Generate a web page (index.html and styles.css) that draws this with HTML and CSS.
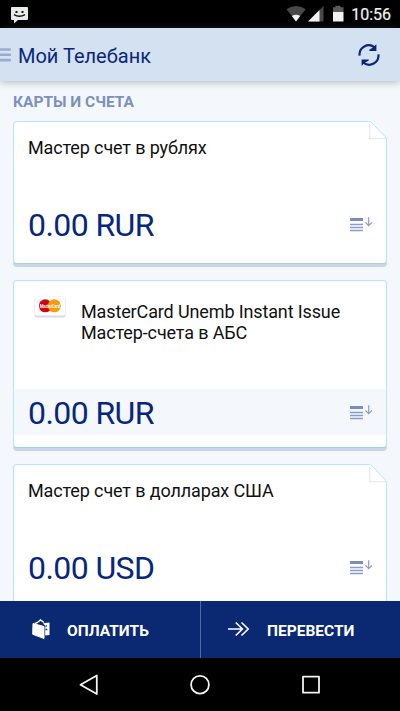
FILE: index.html
```html
<!DOCTYPE html>
<html lang="ru">
<head>
<meta charset="utf-8">
<title>Мой Телебанк</title>
<link rel="stylesheet" href="styles.css">
</head>
<body>
<svg class="defs" aria-hidden="true">
  <symbol id="details" viewBox="0 0 24 16">
    <path d="M0 1h13v3H0z" fill="#7b8dbc"/>
    <path d="M0 7.500h13M0 10.500h13M0 13.500h13" stroke="#8b9bc6" stroke-width="1.400"/>
    <path d="M18.700 .3v8.200M15.400 5.400l3.300 3.300 3.300-3.300" fill="none" stroke="#8b9bc6" stroke-width="1.200"/>
  </symbol>
  <symbol id="fold" viewBox="0 0 20 20">
    <path d="M0 0H20V20H19.500V18.500Q19.500 17.500 18.500 16.500L5 2Q3.500 .5 2 .5H0z" fill="#f4f8fc"/>
    <path d="M2.700 3V17.700H18.500" fill="none" stroke="#e8eaf3" stroke-width="1.300"/>
    <path d="M0 .5H1.500Q3.500 .5 5 2L18 15.500Q19.500 17 19.500 18.500V20" fill="none" stroke="#b2e8f8"/>
  </symbol>
</svg>
<div class="screen">
  <div class="status">
    <svg class="message" viewBox="0 0 18 17"><path d="M1 0h15q1 0 1 1v11q0 1-1 1H7l-4 3.500V13H1q-1 0-1-1V1q0-1 1-1z" fill="#e9ebe9"/><path d="M4.500 4h2v2h-2zM10.500 4h2v2h-2z" fill="#111"/><path d="M3 7.700q5.500 3.300 11 0" fill="none" stroke="#111" stroke-width="1.500"/></svg>
    <svg class="signals" viewBox="0 0 60 18">
      <path d="M.5 4.300Q10 -2.200 19.700 4.300L10 16.500z" fill="#484848"/><path d="M5.900 11Q10 8.400 14.200 11L10 16.500z" fill="#f2f2f2"/>
      <path d="M37.500 1v15.500H22z" fill="#484848"/><path d="M33.500 5v11.500H22z" fill="#f2f2f2"/>
      <path d="M49.500 .7h5v1.500h3V7H47V2.200h2.500z" fill="#5a5a5a"/><path d="M47 7h10.500v9.500H47z" fill="#f2f2f2"/>
    </svg>
    <span class="clock">10:56</span>
  </div>
  <header class="header">
    <svg class="menu" viewBox="0 0 11 14"><path d="M0 1.500h9.800M0 6.800h9.800M0 12.100h9.800" stroke="#9aabd2" stroke-width="2.600" stroke-linecap="round"/></svg>
    <h1 class="title">Мой Телебанк</h1>
    <svg class="refresh" viewBox="0 0 22 22"><path d="M1.600 11.600A9.200 9.200 0 0 1 16.500 3.400M20.400 10.400A9.200 9.200 0 0 1 5.500 18.600" fill="none" stroke="#08277c" stroke-width="2.200"/><path d="M18.400 .3V7H11.300V5.800L14.500 3.800zM3.600 21.700V15.500H10.700V16.700L7.500 18.200z" fill="#08277c"/></svg>
  </header>
  <main class="content">
    <h2 class="section">КАРТЫ И СЧЕТА</h2>
    <article class="card card-account">
      <svg class="fold"><use href="#fold"/></svg>
      <h3 class="name">Мастер счет в рублях</h3>
      <div class="balance"><span class="amount">0.00 RUR</span><svg class="details"><use href="#details"/></svg></div>
    </article>
    <article class="card card-plastic">
      <div class="product">
        <svg class="brand" viewBox="0 0 34 22"><rect x="1.500" y="1.700" width="31" height="19.800" rx="2.500" fill="#d9d9e9"/><rect x="1.800" y=".5" width="30.400" height="19" rx="2" fill="#fff" stroke="#ededf5" stroke-width=".6"/><circle cx="12.300" cy="9.800" r="6.500" fill="#cc0712"/><circle cx="21.300" cy="9.800" r="6.500" fill="#fb9b0c"/><text x="16.800" y="11.700" textLength="20" lengthAdjust="spacingAndGlyphs" text-anchor="middle">MasterCard</text></svg>
        <h3 class="name">MasterCard Unemb Instant Issue<br>Мастер-счета в АБС</h3>
      </div>
      <div class="balance"><span class="amount">0.00 RUR</span><svg class="details"><use href="#details"/></svg></div>
    </article>
    <article class="card card-account">
      <svg class="fold"><use href="#fold"/></svg>
      <h3 class="name">Мастер счет в долларах США</h3>
      <div class="balance"><span class="amount">0.00 USD</span><svg class="details"><use href="#details"/></svg></div>
    </article>
  </main>
  <div class="actions">
    <div class="action"><svg viewBox="0 0 22 20"><path d="M3 4.500L2.700 15.300 14 19.500V7.500z" fill="#fff" stroke="#fff" stroke-linejoin="round"/><path d="M5 4.500L7.500 3.500 10.500 1 14 3.500" fill="none" stroke="#fff" stroke-width="1.400"/><path d="M13 4.200L19.500 3.500V16L15.200 16.500V7z" fill="#fff"/><path d="M15.500 7h1.300M15.500 10.500h1.800" stroke="#0b2972" stroke-width="1.500"/></svg><span>ОПЛАТИТЬ</span></div>
    <div class="action"><svg viewBox="0 0 22 20"><path d="M0 10h14M7.700 3.500l6.700 6.500-6.700 6.500M13.500 3.500l6.700 6.500-6.700 6.500" fill="none" stroke="#fff" stroke-width="1.600"/></svg><span>ПЕРЕВЕСТИ</span></div>
  </div>
  <nav class="nav">
    <svg viewBox="0 0 22 22"><path d="M18.800 1.500v18.500L2.500 10.700z"/></svg>
    <svg viewBox="0 0 22 22"><circle cx="11" cy="10.700" r="8.900"/></svg>
    <svg viewBox="0 0 22 22"><rect x="3" y="2.700" width="16" height="16"/></svg>
  </nav>
</div>
</body>
</html>
```
FILE: styles.css
```css
* { box-sizing: border-box; }
body { margin: 0; font-family: Roboto, sans-serif; background: #000; }
h1, h2, h3 { margin: 0; font-weight: 400; }
svg { display: block; flex: none; }
.defs { position: absolute; width: 0; height: 0; }
.screen { display: flex; flex-direction: column; width: 400px; height: 711px; overflow: hidden; }

.status { display: flex; align-items: center; flex: none; height: 28px; padding: 0 9px 0 11px; color: #f2f2f2; }
.message { width: 18px; height: 17px; margin-top: 2px; }
.signals { width: 60px; height: 18px; margin-left: auto; margin-right: 5px; }
.clock { width: 40px; font-size: 16px; line-height: 28px; padding-top: 1px; text-align: right; white-space: nowrap; -webkit-text-stroke: .2px #f2f2f2; }

.header { position: relative; display: flex; align-items: center; flex: none; height: 53px; padding-right: 20px; background: #d4e1f1; box-shadow: 0 1px 8px rgba(70, 80, 90, .4); }
.menu { width: 11px; height: 14px; }
.title { margin-left: 7px; padding-top: 2px; font-size: 20px; line-height: 28px; color: #08277c; }
.refresh { width: 22px; height: 22px; margin-left: auto; }

.content { display: flex; flex-direction: column; flex: 1; min-height: 0; padding: 12px 13px 0; overflow: hidden; background: #f4f8fc; }
.section { flex: none; margin-bottom: 9px; font-size: 15.500px; font-weight: 700; line-height: 19px; color: #7b90bd; }
.card { position: relative; flex: none; margin-bottom: 16px; border: 1px solid #b2e8f8; border-bottom-color: #9ed4e9; border-radius: 4px; background: #fff; box-shadow: 0 3px 0 #cad5ea; }
.card-account { height: 143px; padding-top: 15px; }
.card-account .name { padding-left: 14px; }
.card-account .balance { margin-top: 44px; }
.card-plastic { height: 168px; }
.fold { position: absolute; top: -1px; right: -1px; width: 20px; height: 20px; }
.name { font-size: 18px; line-height: 21px; letter-spacing: -.13px; color: #111; }
.product { display: flex; height: 108px; padding: 15px 0 0 19px; }
.product .name { margin: 5px 0 0 14px; }
.brand { width: 34px; height: 22px; }
.brand text { font-size: 5.500px; font-weight: 700; font-style: italic; fill: #fff; }
.balance { display: flex; justify-content: space-between; align-items: center; height: 46px; padding: 0 12px 0 14px; }
.card-plastic .balance { background: #f4f8fc; }
.amount { font-size: 32px; line-height: 46px; letter-spacing: -.58px; color: #08277c; }
.card-plastic .amount { padding-top: 2px; }
.card-plastic .details { margin-top: 1px; }
.details { width: 24px; height: 16px; }

.actions { display: grid; grid-template-columns: 200px 200px; flex: none; height: 57px; background: #0b2972; }
.action { display: flex; align-items: center; padding: 2px 0 0 30px; gap: 15px; color: #fff; font-size: 15.500px; font-weight: 700; }
.action + .action { padding-left: 27px; gap: 17px; border-left: 1px solid #536a9e; }
.action svg { width: 22px; height: 20px; margin-bottom: 3px; }
.nav { display: flex; justify-content: center; align-items: center; flex: none; gap: 89px; height: 53px; background: #000; }
.nav svg { width: 22px; height: 22px; fill: none; stroke: #f2f2f2; stroke-width: 1.800; stroke-linejoin: round; }
```
